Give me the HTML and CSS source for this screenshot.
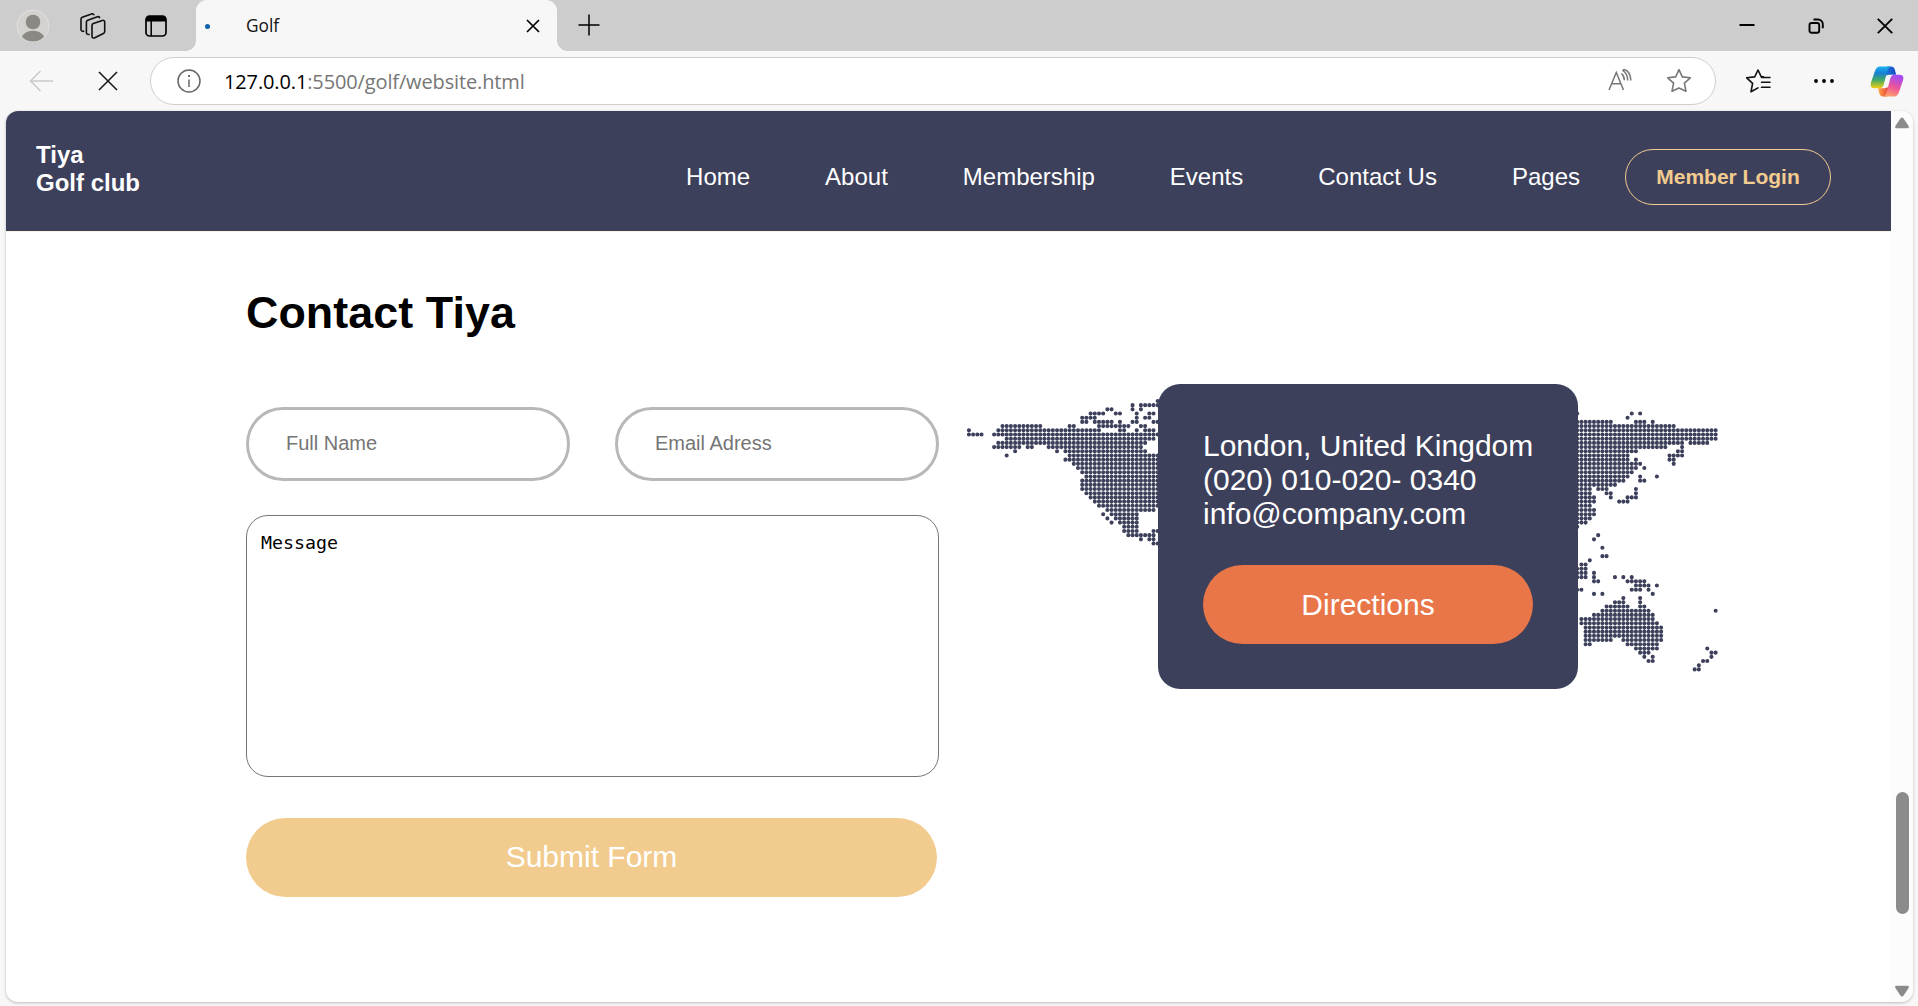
FILE: index.html
```html
<!DOCTYPE html>
<html lang="en">
<head>
<meta charset="utf-8">
<title>Golf</title>
<link rel="stylesheet" href="styles.css">
</head>
<body>
<div class="browser">
  <header class="tabstrip">
    <div class="tabstrip-tools">
      <svg class="avatar" width="34" height="34" viewBox="0 0 34 34"><defs><clipPath id="face"><circle cx="17" cy="17" r="15.5"/></clipPath></defs><circle cx="17" cy="17" r="16" fill="#d3d2ce" stroke="#e2e1df"/><g fill="#8c8884" clip-path="url(#face)"><circle cx="17" cy="13" r="7.3"/><path d="M4.500 34c0-8 5-12.300 12.500-12.300S29.500 26 29.500 34z"/></g></svg>
      <svg class="workspaces" width="26" height="26" viewBox="0 0 26 26" fill="none" stroke="#111" stroke-width="1.600" stroke-linejoin="round" stroke-linecap="round"><path d="M12 12.200c0-.9.500-1.500 1.300-1.800l9-3c1.400-.4 2.400.3 2.400 1.600v9.500c0 .9-.5 1.600-1.300 2l-8.600 4.300c-1.500.7-2.800-.1-2.800-1.600z"/><path d="M9 21.400c-1.500.4-2.600-.4-2.600-1.800V9c0-.9.500-1.500 1.300-1.800l9.700-3.400c1-.3 1.800 0 2.200.8"/><path d="M3.700 18.300c-1.600.2-2.700-.6-2.700-1.900V6.200c0-.9.500-1.600 1.300-1.900L11.500.9c1-.3 1.800 0 2.300.8"/></svg>
      <svg class="tab-actions" width="22" height="22" viewBox="0 0 22 22"><rect x="1" y="1" width="20" height="20" rx="3.500" fill="none" stroke="#000" stroke-width="1.700"/><path d="M1 6.500V4a3 3 0 0 1 3-3h14a3 3 0 0 1 3 3v2.500z"/><path d="M6.200 6v15" stroke="#000" stroke-width="1.500"/></svg>
    </div>
    <div class="tab">
      <span class="tab-spinner"></span>
      <span class="tab-title">Golf</span>
      <svg width="14" height="14" viewBox="0 0 14 14" stroke="#000" stroke-width="1.700"><path d="M1 1l12 12M13 1L1 13"/></svg>
    </div>
    <svg class="new-tab" width="22" height="22" viewBox="0 0 22 22" stroke="#000" stroke-width="1.500"><path d="M11 .5v21M.5 11h21"/></svg>
    <div class="window-buttons">
      <svg width="16" height="16" viewBox="0 0 16 16" stroke="#000" stroke-width="2"><path d="M.5 7h15"/></svg>
      <svg width="16" height="16" viewBox="0 0 16 16" fill="none" stroke="#000" stroke-width="1.900"><rect x="1.500" y="5" width="9.700" height="9.700" rx="2"/><path d="M5.500 1.500H10a4.800 4.800 0 0 1 4.800 4.800v4"/></svg>
      <svg width="16" height="16" viewBox="0 0 16 16" stroke="#000" stroke-width="1.900"><path d="M.8.800l14.400 14.400M15.200.800L.8 15.200"/></svg>
    </div>
  </header>

  <div class="toolbar">
    <svg class="back" width="24" height="22" viewBox="0 0 24 22" fill="none" stroke="#c9c9c9" stroke-width="1.500"><path d="M11.500 1L1.500 11l10 10M1.500 11H24"/></svg>
    <svg class="stop" width="20" height="20" viewBox="0 0 20 20" stroke="#1a1a1a" stroke-width="1.600"><path d="M1 1l18 18M19 1L1 19"/></svg>
    <div class="address">
      <svg class="info" width="24" height="24" viewBox="0 0 24 24" fill="none" stroke="#666" stroke-width="1.500"><circle cx="12" cy="12" r="11"/><path d="M12 10.500V18"/><path d="M12 6v2" stroke-width="1.900"/></svg>
      <span class="url"><b>127.0.0.1</b>:5500/golf/website.html</span>
      <svg class="read-aloud" width="24" height="22" viewBox="0 0 24 22" fill="none" stroke="#777" stroke-width="1.500"><path d="M1 21L8.300 3.500 15.500 21M3.700 14.700h9.200M13.300 4.500c2 1.500 3.100 3.800 3 6.800M14.300 1.200c3.400 2 5.400 5.400 5.400 10.400M15 .2c4.600.8 7.700 5 7.900 11.400"/></svg>
      <svg class="star" width="26" height="26" viewBox="0 0 26 26" fill="none" stroke="#777" stroke-width="1.600" stroke-linejoin="round"><path d="M13 1.700l3.300 7.200 8 .9-5.900 5.400 1.600 8L13 20l-7 3.200 1.600-8L1.700 9.800l8-.9z"/></svg>
    </div>
    <svg class="favorites" width="26" height="26" viewBox="0 0 26 26" fill="none" stroke="#111" stroke-width="1.600" stroke-linejoin="round" stroke-linecap="round"><path d="M18.500 8.900h-2.200L13 2 9.700 8.900l-8 .9 5.900 5.600L6 23.800l7-3.900M16.500 9.500h8.500M16.500 14.300H25M16.500 19.300H25"/></svg>
    <svg class="more" width="20" height="6" viewBox="0 0 20 6"><circle cx="2" cy="3" r="1.900"/><circle cx="10" cy="3" r="1.900"/><circle cx="18" cy="3" r="1.900"/></svg>
    <svg class="copilot" width="34" height="31" viewBox="0 0 34 31">
      <defs>
        <linearGradient id="cool" x1="0" y1="0" x2="0" y2="1"><stop offset="0" stop-color="#1bb2ef"/><stop offset=".3" stop-color="#1680d4"/><stop offset=".62" stop-color="#43a963"/><stop offset="1" stop-color="#f5cf10"/></linearGradient>
        <linearGradient id="warm" x1=".4" y1="0" x2=".1" y2="1"><stop offset="0" stop-color="#a64cf0"/><stop offset=".5" stop-color="#ef5595"/><stop offset="1" stop-color="#ffac65"/></linearGradient>
        <linearGradient id="blue"><stop offset="0" stop-color="#1b7ee0"/><stop offset="1" stop-color="#1847c4"/></linearGradient>
        <linearGradient id="fire"><stop offset="0" stop-color="#ffad45"/><stop offset="1" stop-color="#e93f3d"/></linearGradient>
      </defs>
      <path fill="url(#blue)" d="M17 .5h4c2 0 3.200 1 3.800 3l1.400 5.200h-4c-2.500 0-3.700-.2-5.200.6l-2 .7z"/>
      <path fill="url(#fire)" d="M8 22.300h4c2.500 0 3.400 0 4.300-.6l2.200-.7-1.500 9.500h-4c-2 0-3-1-3.600-3z"/>
      <path fill="url(#cool)" d="M21 .5H10C7.500.5 5.800 2 4.600 6L1.200 16c-1.500 4.500 0 6.300 3.500 6.300h4.500c2.500 0 3.700-1 4.600-4L17 6c.8-3 1.800-5.300 4-5.500z"/>
      <path fill="url(#warm)" d="M13 30.500h11c2.500 0 4.200-1.500 5.400-5.500l3.400-10c1.500-4.500 0-6.300-3.500-6.300h-4.500c-2.500 0-3.700 1-4.600 4L17 25c-.8 3-1.800 5.300-4 5.500z"/>
    </svg>
  </div>

  <div class="viewport">
    <div class="page">
      <div class="navbar">
        <div class="brand">Tiya<br>Golf club</div>
        <nav class="links">
          <a>Home</a><a>About</a><a>Membership</a><a>Events</a><a>Contact Us</a><a>Pages</a>
        </nav>
        <a class="login">Member Login</a>
      </div>
      <main class="contact">
        <form class="form">
          <h1>Contact Tiya</h1>
          <div class="fields">
            <input type="text" placeholder="Full Name">
            <input type="text" placeholder="Email Adress">
          </div>
          <textarea>Message</textarea>
          <button class="submit" type="button">Submit Form</button>
        </form>
        <section class="map">
          <svg class="dots" width="755" height="276" viewBox="-0.700 -0.700 179.976 65.793"><path id="land"/></svg>
          <div class="card">
            <p>London, United Kingdom<br>(020) 010-020- 0340<br>info@company.com</p>
            <button type="button">Directions</button>
          </div>
        </section>
      </main>
    </div>
    <div class="scrollbar">
      <svg width="14" height="12" viewBox="0 0 14 12" fill="#8b8b8b"><path d="M5.400 1.500c.8-1.200 2.400-1.200 3.200 0l5 7.500c.7 1.200.1 2.200-1.300 2.200H1.700C.3 11.200-.3 10.200.4 9z"/></svg>
      <div class="track"><div class="thumb"></div></div>
      <svg width="14" height="12" viewBox="0 0 14 12" fill="#8b8b8b"><path d="M5.400 10.500c.8 1.200 2.400 1.200 3.200 0l5-7.500c.7-1.200.1-2.200-1.300-2.200H1.700C.3.800-.3 1.800.4 3z"/></svg>
    </div>
  </div>
</div>
<script src="map.js"></script>
</body>
</html>
```
FILE: styles.css
```css
* { box-sizing: border-box; }
body { margin: 0; font-family: "Liberation Sans", Arial, sans-serif; }
svg { display: block; flex: none; }

.browser { width: 1918px; height: 1006px; display: flex; flex-direction: column; background: #f7f7f7; overflow: hidden; }

/* Tab strip */
.tabstrip { height: 51px; flex: none; display: flex; align-items: center; background: #cdcdcd; }
.tabstrip-tools { width: 196px; display: flex; align-items: center; padding-left: 16px; }
.workspaces { margin-left: 30px; }
.tab-actions { margin-left: 39px; }
.tab { position: relative; width: 361px; height: 51px; display: flex; align-items: center; padding: 0 17px 0 9px; background: #f7f7f7; border-radius: 11px 11px 0 0; }
.tab::before, .tab::after { content: ""; position: absolute; bottom: 0; width: 10px; height: 10px; }
.tab::before { left: -10px; background: radial-gradient(circle at 0 0, transparent 9.5px, #f7f7f7 10px); }
.tab::after { right: -10px; background: radial-gradient(circle at 100% 0, transparent 9.5px, #f7f7f7 10px); }
.tab-spinner { width: 5px; height: 5px; border-radius: 50%; background: #0c5fa8; margin-top: 2px; }
.tab-title { flex: 1; padding-left: 36px; font: 17.300px "Open Sans", sans-serif; color: #111; }
.new-tab { margin: 0 0 2px 21px; }
.window-buttons { margin-left: auto; display: flex; gap: 53px; padding-right: 25px; }

/* Toolbar */
.toolbar { height: 60px; flex: none; display: flex; align-items: center; }
.back { margin-left: 29px; }
.stop { margin-left: 45px; }
.address { width: 1566px; height: 48px; margin-left: 32px; display: flex; align-items: center; padding: 0 23px 0 26px; background: #fff; border: 1.500px solid #cfcfcf; border-radius: 24px; }
.url { flex: 1; margin-left: 23px; font: 20px "Open Sans", sans-serif; letter-spacing: -.13px; color: #767676; }
.url b { font-weight: 400; color: #000; }
.read-aloud { margin-bottom: 3px; }
.star { margin-left: 34px; }
.favorites { margin-left: 29px; }
.more { margin-left: 43px; }
.copilot { margin-left: 36px; }

/* Page frame */
.viewport { width: 1907px; height: 891px; margin-left: 6px; display: flex; background: #fff; border-radius: 12px; overflow: hidden; box-shadow: 0 1px 3px rgba(0, 0, 0, .25); }
.page { width: 1885px; }
.scrollbar { width: 22px; background: #fcfcfc; display: flex; flex-direction: column; align-items: center; justify-content: space-between; padding: 6px 0 5px; }
.track { flex: 1; display: flex; align-items: flex-end; padding-bottom: 71px; }
.thumb { width: 13px; height: 122px; border-radius: 7px; background: #8b8b8b; }

/* Site header */
.navbar { height: 121px; display: flex; align-items: center; padding: 0 60px 0 30px; background: #3d405b; color: #fff; border-bottom: 1px solid #faf3e2; }
.brand { font-size: 24px; line-height: 28px; font-weight: 700; margin-top: -4px; }
.links { margin-left: auto; display: flex; gap: 75px; font-size: 24px; padding-top: 12px; }
.login { width: 206px; height: 56px; margin: 12px 0 0 45px; border: 1px solid #f2cc8f; border-radius: 28px; color: #f2cc8f; font-size: 21px; font-weight: 700; display: flex; align-items: center; justify-content: center; }

/* Contact section */
.contact { display: flex; padding: 54px 0 0 240px; }
.form { width: 693px; }
h1 { margin: 0; font-size: 44.800px; line-height: 52px; letter-spacing: .08px; }
.fields { display: flex; justify-content: space-between; margin-top: 69px; }
input { width: 324px; height: 74px; border: 3px solid #b8b8b8; border-radius: 37px; padding: 0 37px 2px; font: 20px "Liberation Sans", Arial, sans-serif; }
input::placeholder { color: #757575; }
textarea { display: block; width: 693px; height: 262px; margin-top: 34px; padding: 15px 14px; border: 1px solid #767676; border-radius: 22px; resize: none; font: 18.300px/24px "DejaVu Sans Mono", monospace; color: #000; }
button { display: block; height: 79px; padding: 0; border: 0; border-radius: 40px; color: #fff; font: 30px "Liberation Sans", Arial, sans-serif; }
.submit { width: 691px; margin-top: 41px; padding-bottom: 2px; background: #f2cc8f; }

.map { display: grid; width: 755px; margin: 98px 0 0 27px; height: 305px; }
.map > * { grid-area: 1 / 1; }
.dots { margin-top: 14px; }
#land { fill: none; stroke: #3d405b; stroke-width: .98; stroke-linecap: round; stroke-dasharray: 0 1; }
.card { z-index: 1; width: 420px; height: 305px; margin-left: 192px; padding: 45px; border-radius: 22px; background: #3d405b; color: #fff; font-size: 30px; line-height: 34px; }
.card p { margin: 0 0 34px; white-space: nowrap; }
.card button { width: 330px; background: #e97649; }
```
FILE: map.js
```js
// Each row lists the columns with a dot on them: single columns or first-last runs.
const rows = {
  0: "45", 1: "39 41-45", 2: "33-34 39 41",
  3: "29-32 35-36 40 43-44 145 158 160",
  4: "27-30 40 42-43 157",
  5: "27-28 30-34 36 39-40 44-45 145-153 159-161 163",
  6: "8-17 24-25 31-38 41-42 145-168",
  7: "0 7-31 36-37 40 42-44 145-178",
  8: "0-3 6-45 145-178", 9: "9-44 145-178",
  10: "7-42 145-170 172-176",
  11: "6-12 14-15 19-41 145-166 170",
  12: "11 21 23-42 145-159 169-170",
  13: "9 24-45 145-157 167-170",
  14: "23-45 145-157 159 167-168",
  15: "25-45 145-160 168", 16: "26-45 145-159 161",
  17: "27-45 145-158", 18: "28-45 145-157 160 164",
  19: "27-45 145-156 160-161", 20: "27-45 145-154",
  21: "27-45 145-148 150-152 159",
  22: "28-45 145-148 152-153 159",
  23: "29-45 145-149 153 157-159",
  24: "30-45 145-149 155-157",
  25: "31-45 145-148", 26: "33-44 145-149",
  27: "32 34-40 145-149", 28: "33 35-40 145-148",
  29: "34 36-40 145-147", 30: "37-40 145",
  31: "37-40 44-45", 32: "38-44 150", 33: "41 43-44 149",
  34: "44-45", 35: "151", 37: "151-152", 38: "148",
  39: "146-147", 40: "145-147", 41: "145-147 149",
  42: "145-147 149 154 156 158", 43: "149-150 157-161",
  44: "159-162 164", 45: "145-146 158-160 162",
  46: "149 151 163", 47: "156 160", 48: "154-156 160",
  49: "152-157 160-161", 50: "151-162 178", 51: "149-163",
  52: "146-163", 53: "146-164", 54: "147-165", 55: "147-165",
  56: "147-165", 57: "147-153 156-165", 58: "147-148 157-164",
  59: "159-164 176", 60: "160-162 177-178", 61: "161 163 177",
  62: "162-163 175-176", 63: "174", 64: "173-174"
};

let d = "";
for (const [y, runs] of Object.entries(rows)) {
  for (const run of runs.split(" ")) {
    const [from, to = from] = run.split("-").map(Number);
    d += `M${from} ${y}h${to - from + 0.01}`;
  }
}
document.getElementById("land").setAttribute("d", d);
```
